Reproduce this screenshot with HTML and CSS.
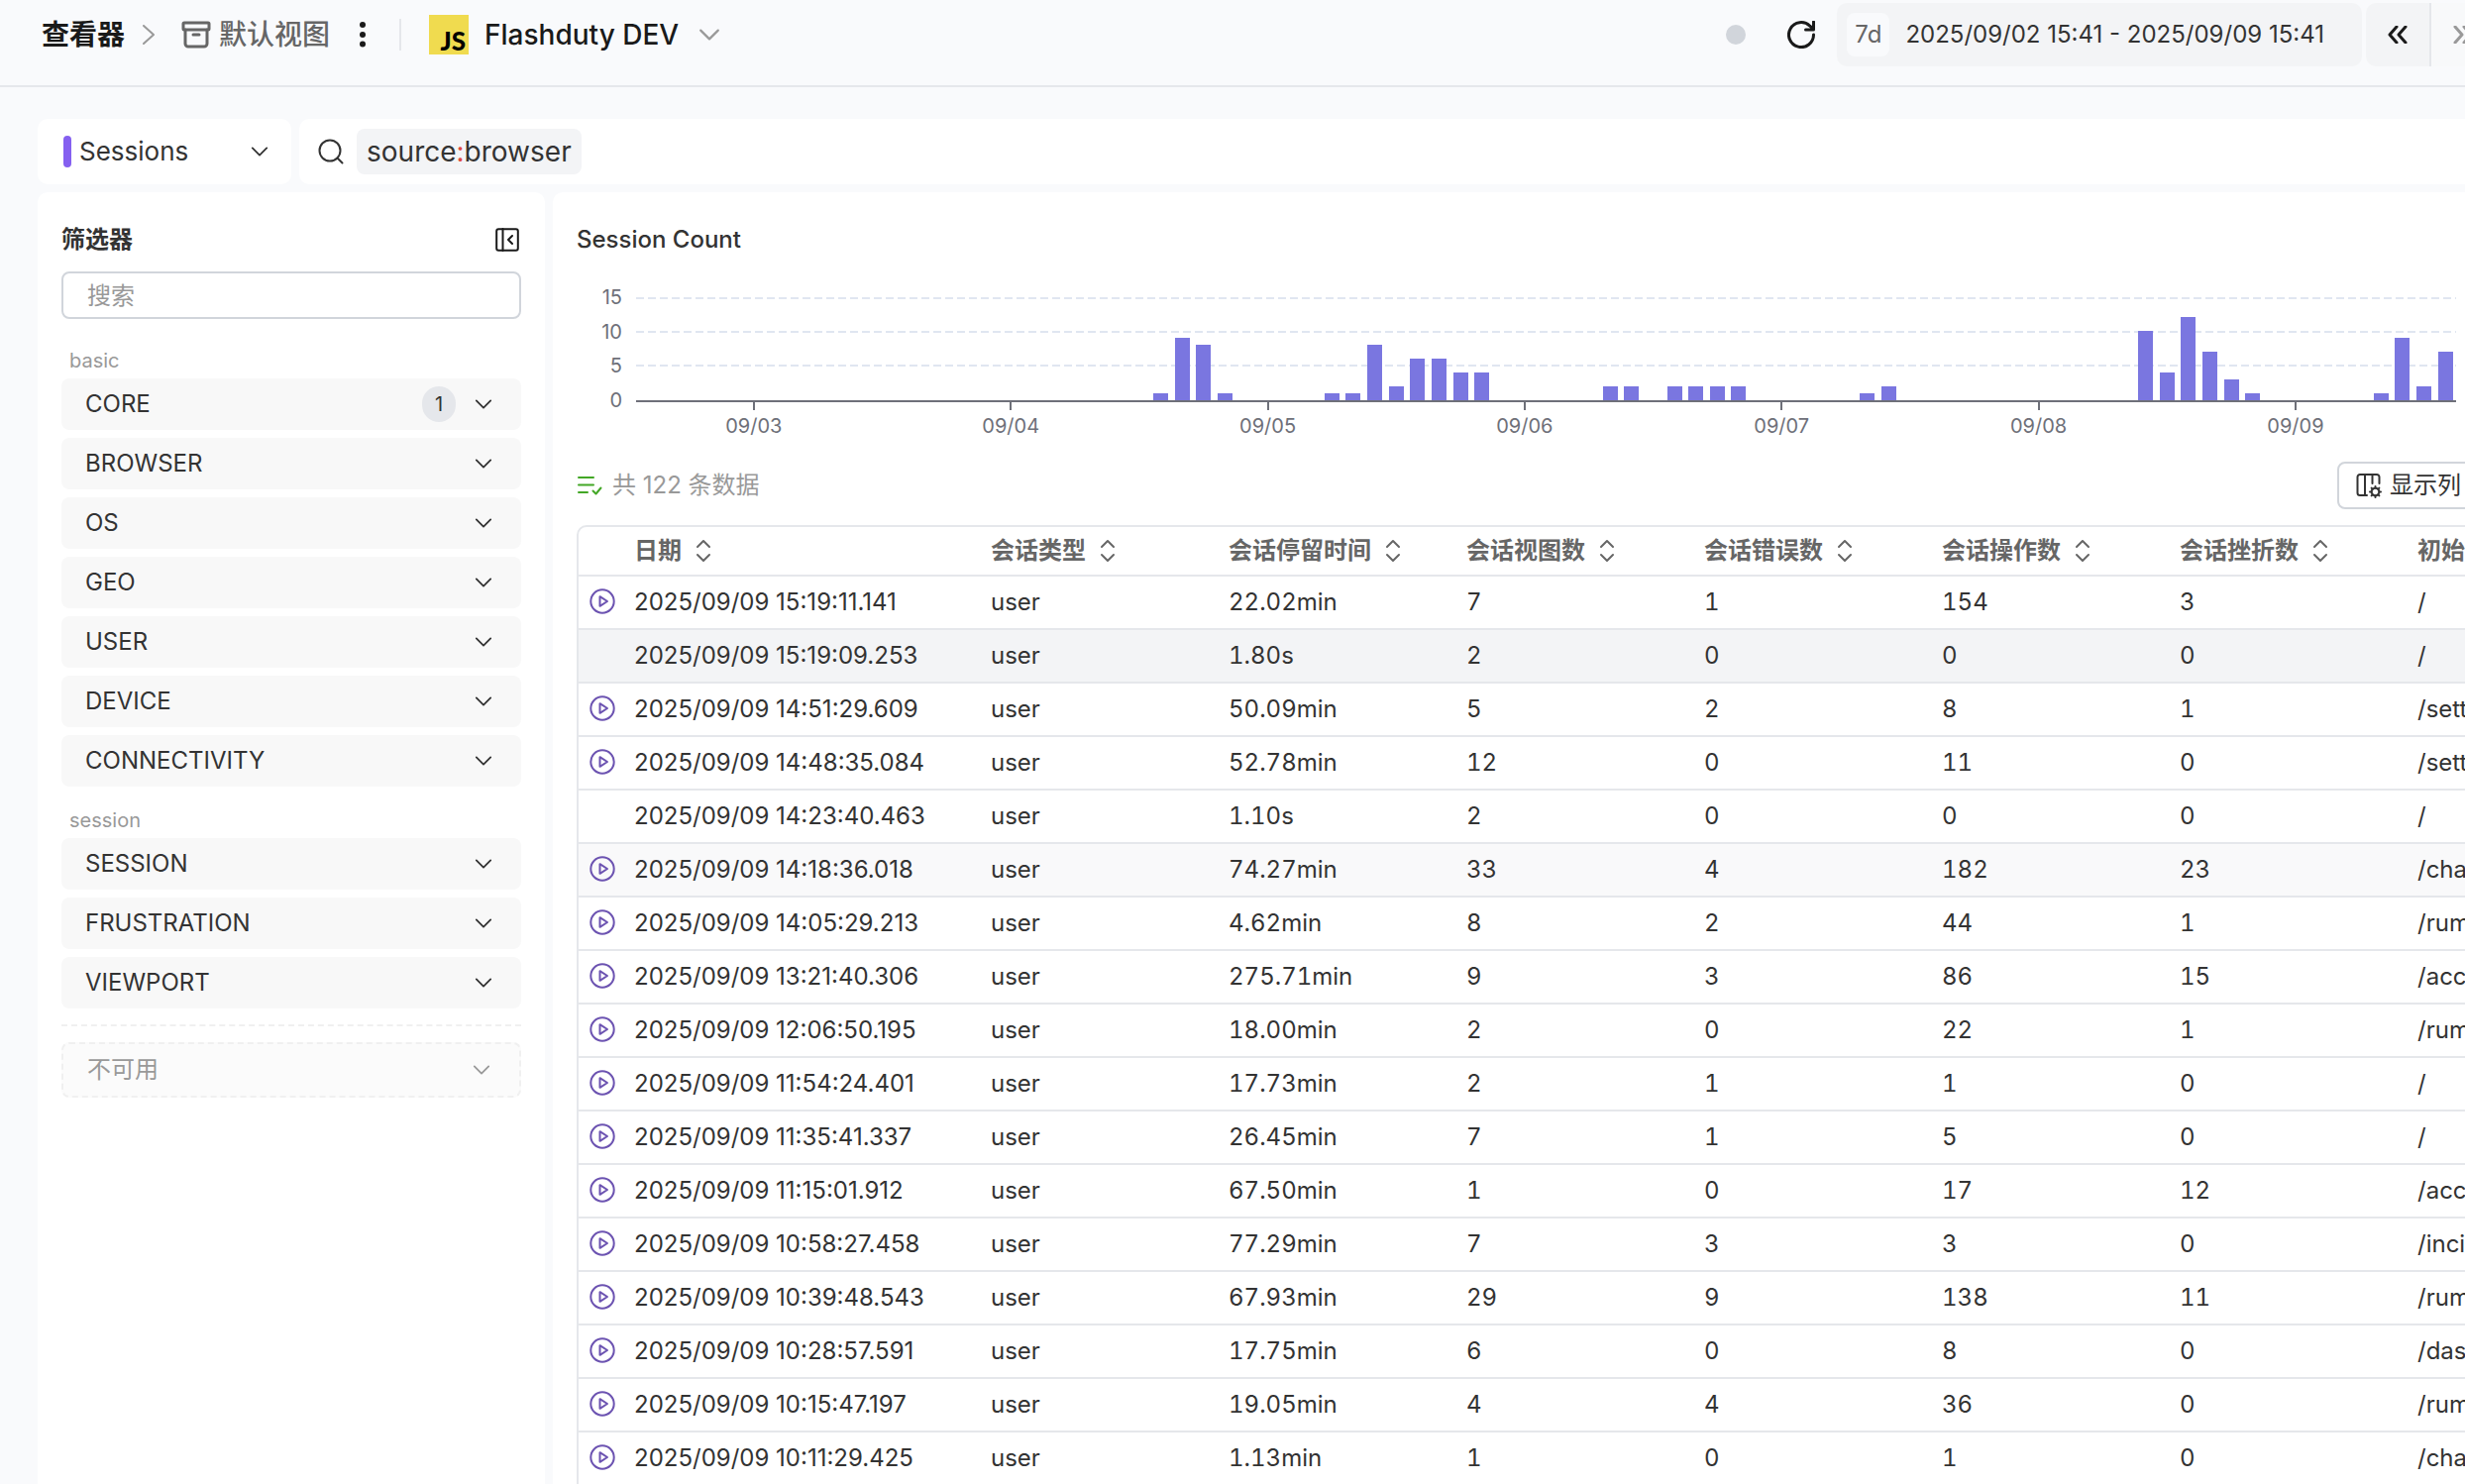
FILE: index.html
```html
<!DOCTYPE html>
<html lang="zh-CN">
<head>
<meta charset="utf-8">
<title>查看器 - Flashduty</title>
<link rel="stylesheet" href="styles.css">
</head>
<body>
<svg class="sprite" aria-hidden="true">
  <symbol id="down" viewBox="0 0 20 12"><path d="M2 2l8 8 8-8"/></symbol>
  <symbol id="sort" viewBox="0 0 16 24"><path d="M2 8l6-6 6 6M2 16l6 6 6-6"/></symbol>
  <symbol id="play" viewBox="0 0 26 26"><circle cx="13" cy="13" r="11.700"/><path d="M10.500 8.200v9.600l7.500-4.800z"/></symbol>
</svg>
<div class="app">
  <header class="topbar">
    <nav class="crumbs" aria-label="导航">
      <a class="crumb" href="#">查看器</a>
      <svg class="icon crumb-sep" viewBox="0 0 12 20"><path d="M1 1l10 9-10 9"/></svg>
      <a class="view" href="#">
        <svg class="icon archive" viewBox="0 0 30 28"><rect x="2" y="2" width="26" height="7" rx="1"/><path d="M4 9v14a3 3 0 0 0 3 3h16a3 3 0 0 0 3-3V9M12 14h6"/></svg>
        默认视图
      </a>
      <button class="more" aria-label="更多"><svg viewBox="0 0 6 26"><circle cx="3" cy="3" r="3"/><circle cx="3" cy="13" r="3"/><circle cx="3" cy="22.500" r="3"/></svg></button>
      <button class="project">
        <span class="js">JS</span>
        Flashduty DEV
        <svg class="icon chev-lg"><use href="#down"/></svg>
      </button>
    </nav>
    <div class="time">
      <span class="dot"></span>
      <button class="refresh" aria-label="刷新"><svg class="icon" viewBox="0 0 28 28"><path d="M26.500 14a12.500 12.500 0 1 1-3.700-8.800l3.700 3.300M26.500 1v8h-8"/></svg></button>
      <button class="range"><span class="preset">7d</span>2025/09/02 15:41 - 2025/09/09 15:41</button>
      <div class="steps">
        <button aria-label="上一段"><svg class="icon" viewBox="0 0 20 18"><path d="M9 1L2 9l7 8M18 1l-7 8 7 8"/></svg></button>
        <button aria-label="下一段" disabled><svg class="icon" viewBox="0 0 20 18"><path d="M2 1l7 8-7 8M11 1l7 8-7 8"/></svg></button>
      </div>
    </div>
  </header>

  <div class="workspace">
    <div class="query">
      <label class="scope">
        <span class="scope-mark"></span>
        <select aria-label="类型"><option>Sessions</option></select>
        <svg class="icon chev"><use href="#down"/></svg>
      </label>
      <div class="search">
        <svg class="icon" viewBox="0 0 26 26"><circle cx="12" cy="12" r="10.500"/><path d="M19.500 19.500l5 5"/></svg>
        <span class="token">source<b>:</b>browser</span>
        <input aria-label="查询">
      </div>
    </div>

    <div class="columns">
      <aside class="panel filters">
        <div class="filters-head">
          <h2>筛选器</h2>
          <button aria-label="收起"><svg class="icon" viewBox="0 0 24 24"><rect x="1.200" y="1.200" width="21.600" height="21.600" rx="2"/><path d="M7.500 1v22M17 8l-4 4 4 4"/></svg></button>
        </div>
        <input class="find" placeholder="搜索" aria-label="搜索">
        <h3>basic</h3>
        <div class="group">
          <button>CORE<span class="count">1</span><svg class="icon chev"><use href="#down"/></svg></button>
          <button>BROWSER<svg class="icon chev"><use href="#down"/></svg></button>
          <button>OS<svg class="icon chev"><use href="#down"/></svg></button>
          <button>GEO<svg class="icon chev"><use href="#down"/></svg></button>
          <button>USER<svg class="icon chev"><use href="#down"/></svg></button>
          <button>DEVICE<svg class="icon chev"><use href="#down"/></svg></button>
          <button>CONNECTIVITY<svg class="icon chev"><use href="#down"/></svg></button>
        </div>
        <h3>session</h3>
        <div class="group">
          <button>SESSION<svg class="icon chev"><use href="#down"/></svg></button>
          <button>FRUSTRATION<svg class="icon chev"><use href="#down"/></svg></button>
          <button>VIEWPORT<svg class="icon chev"><use href="#down"/></svg></button>
        </div>
        <hr>
        <button class="unavailable">不可用<svg class="icon chev"><use href="#down"/></svg></button>
      </aside>

      <main class="panel results">
        <h2>Session Count</h2>
        <div class="chart">
          <div class="scale"><span>15</span><span>10</span><span>5</span><span>0</span></div>
          <div class="plot">
            <i style="--c:25;--v:1"></i><i style="--c:26;--v:9"></i><i style="--c:27;--v:8"></i><i style="--c:28;--v:1"></i>
            <i style="--c:33;--v:1"></i><i style="--c:34;--v:1"></i><i style="--c:35;--v:8"></i><i style="--c:36;--v:2"></i><i style="--c:37;--v:6"></i><i style="--c:38;--v:6"></i><i style="--c:39;--v:4"></i><i style="--c:40;--v:4"></i>
            <i style="--c:46;--v:2"></i><i style="--c:47;--v:2"></i><i style="--c:49;--v:2"></i><i style="--c:50;--v:2"></i><i style="--c:51;--v:2"></i><i style="--c:52;--v:2"></i>
            <i style="--c:58;--v:1"></i><i style="--c:59;--v:2"></i>
            <i style="--c:71;--v:10"></i><i style="--c:72;--v:4"></i><i style="--c:73;--v:12"></i><i style="--c:74;--v:7"></i><i style="--c:75;--v:3"></i><i style="--c:76;--v:1"></i>
            <i style="--c:82;--v:1"></i><i style="--c:83;--v:9"></i><i style="--c:84;--v:2"></i><i style="--c:85;--v:7"></i>
          </div>
          <div class="days">
            <span style="--c:4">09/03</span><span style="--c:16">09/04</span><span style="--c:28">09/05</span><span style="--c:40">09/06</span><span style="--c:52">09/07</span><span style="--c:64">09/08</span><span style="--c:76">09/09</span>
          </div>
        </div>

        <div class="summary">
          <svg class="icon" viewBox="0 0 26 20"><path d="M2 2h15M2 9.500h15M2 17h9M16.500 15.500l3 3 5-6"/></svg>
          <span>共 122 条数据</span>
          <button><svg class="icon" viewBox="0 0 26 26"><path d="M11 23H4a2.500 2.500 0 0 1-2.500-2.500v-16A2.500 2.500 0 0 1 4 2h17a2.500 2.500 0 0 1 2.500 2.500V11M9 2v21M16.500 2v9"/><circle cx="19.500" cy="19.500" r="3.800"/><path d="M19.500 14v1.500M19.500 23.500V25M14 19.500h1.500M23.500 19.500H25M15.600 15.600l1.200 1.200M22.200 22.200l1.200 1.200M15.600 23.400l1.200-1.200M22.200 16.800l1.200-1.200"/></svg>显示列</button>
        </div>

        <div class="table-wrap">
          <table>
            <colgroup><col class="c-play"><col class="c-date"><col><col><col><col><col><col><col></colgroup>
            <thead>
              <tr><th></th><th>日期<svg class="icon sort"><use href="#sort"/></svg></th><th>会话类型<svg class="icon sort"><use href="#sort"/></svg></th><th>会话停留时间<svg class="icon sort"><use href="#sort"/></svg></th><th>会话视图数<svg class="icon sort"><use href="#sort"/></svg></th><th>会话错误数<svg class="icon sort"><use href="#sort"/></svg></th><th>会话操作数<svg class="icon sort"><use href="#sort"/></svg></th><th>会话挫折数<svg class="icon sort"><use href="#sort"/></svg></th><th>初始页面</th></tr>
            </thead>
            <tbody>
              <tr><td><svg class="icon play"><use href="#play"/></svg></td><td>2025/09/09 15:19:11.141</td><td>user</td><td>22.02min</td><td>7</td><td>1</td><td>154</td><td>3</td><td>/</td></tr>
              <tr class="active"><td></td><td>2025/09/09 15:19:09.253</td><td>user</td><td>1.80s</td><td>2</td><td>0</td><td>0</td><td>0</td><td>/</td></tr>
              <tr><td><svg class="icon play"><use href="#play"/></svg></td><td>2025/09/09 14:51:29.609</td><td>user</td><td>50.09min</td><td>5</td><td>2</td><td>8</td><td>1</td><td>/settings</td></tr>
              <tr><td><svg class="icon play"><use href="#play"/></svg></td><td>2025/09/09 14:48:35.084</td><td>user</td><td>52.78min</td><td>12</td><td>0</td><td>11</td><td>0</td><td>/settings</td></tr>
              <tr><td></td><td>2025/09/09 14:23:40.463</td><td>user</td><td>1.10s</td><td>2</td><td>0</td><td>0</td><td>0</td><td>/</td></tr>
              <tr class="hover"><td><svg class="icon play"><use href="#play"/></svg></td><td>2025/09/09 14:18:36.018</td><td>user</td><td>74.27min</td><td>33</td><td>4</td><td>182</td><td>23</td><td>/channel</td></tr>
              <tr><td><svg class="icon play"><use href="#play"/></svg></td><td>2025/09/09 14:05:29.213</td><td>user</td><td>4.62min</td><td>8</td><td>2</td><td>44</td><td>1</td><td>/rum</td></tr>
              <tr><td><svg class="icon play"><use href="#play"/></svg></td><td>2025/09/09 13:21:40.306</td><td>user</td><td>275.71min</td><td>9</td><td>3</td><td>86</td><td>15</td><td>/account</td></tr>
              <tr><td><svg class="icon play"><use href="#play"/></svg></td><td>2025/09/09 12:06:50.195</td><td>user</td><td>18.00min</td><td>2</td><td>0</td><td>22</td><td>1</td><td>/rum</td></tr>
              <tr><td><svg class="icon play"><use href="#play"/></svg></td><td>2025/09/09 11:54:24.401</td><td>user</td><td>17.73min</td><td>2</td><td>1</td><td>1</td><td>0</td><td>/</td></tr>
              <tr><td><svg class="icon play"><use href="#play"/></svg></td><td>2025/09/09 11:35:41.337</td><td>user</td><td>26.45min</td><td>7</td><td>1</td><td>5</td><td>0</td><td>/</td></tr>
              <tr><td><svg class="icon play"><use href="#play"/></svg></td><td>2025/09/09 11:15:01.912</td><td>user</td><td>67.50min</td><td>1</td><td>0</td><td>17</td><td>12</td><td>/account</td></tr>
              <tr><td><svg class="icon play"><use href="#play"/></svg></td><td>2025/09/09 10:58:27.458</td><td>user</td><td>77.29min</td><td>7</td><td>3</td><td>3</td><td>0</td><td>/incident</td></tr>
              <tr><td><svg class="icon play"><use href="#play"/></svg></td><td>2025/09/09 10:39:48.543</td><td>user</td><td>67.93min</td><td>29</td><td>9</td><td>138</td><td>11</td><td>/rum</td></tr>
              <tr><td><svg class="icon play"><use href="#play"/></svg></td><td>2025/09/09 10:28:57.591</td><td>user</td><td>17.75min</td><td>6</td><td>0</td><td>8</td><td>0</td><td>/dashboard</td></tr>
              <tr><td><svg class="icon play"><use href="#play"/></svg></td><td>2025/09/09 10:15:47.197</td><td>user</td><td>19.05min</td><td>4</td><td>4</td><td>36</td><td>0</td><td>/rum</td></tr>
              <tr><td><svg class="icon play"><use href="#play"/></svg></td><td>2025/09/09 10:11:29.425</td><td>user</td><td>1.13min</td><td>1</td><td>0</td><td>1</td><td>0</td><td>/channel</td></tr>
            </tbody>
          </table>
        </div>
      </main>
    </div>
  </div>
</div>
</body>
</html>
```
FILE: styles.css
```css
* { box-sizing: border-box; }

body {
  margin: 0;
  height: 100vh;
  overflow: hidden;
  background: #f9fafc;
  color: #333;
  font: 24px/36px Inter, "Noto Sans CJK SC", sans-serif;
}

h2, h3 { margin: 0; }
a { color: inherit; text-decoration: none; }
button, input, select {
  margin: 0;
  padding: 0;
  border: 0;
  background: none;
  color: inherit;
  font: inherit;
  outline: none;
}

.sprite { position: absolute; width: 0; height: 0; }
.icon {
  flex: none;
  fill: none;
  stroke: currentColor;
  stroke-width: 2;
  stroke-linecap: round;
  stroke-linejoin: round;
}
.chev { width: 18px; height: 12px; stroke-width: 2; }
.chev-lg { width: 22px; height: 14px; stroke-width: 2; color: #999; }

/* The workspace is wider than the viewport and runs off to the right */
.app {
  width: calc(100% + 40px);
  min-height: 100vh;
  display: flex;
  flex-direction: column;
}

/* Top bar */
.topbar {
  display: flex;
  justify-content: space-between;
  align-items: center;
  height: 88px;
  padding: 0 10px 16px 42px;
  border-bottom: 2px solid #e5e7eb;
}
.crumbs, .view, .project, .time, .range, .steps { display: flex; align-items: center; }
.crumbs { font-size: 28px; color: #1a1a1a; }
.crumb { font-weight: 700; }
.crumb-sep { width: 12px; height: 20px; margin: 0 27px 0 18px; color: #999; stroke-width: 2; }
.view { gap: 8px; font-weight: 500; color: #666; }
.archive { width: 30px; height: 28px; stroke-width: 3; }
.more { display: flex; margin: 0 34px 0 30px; }
.more svg { width: 6px; height: 26px; fill: #1a1a1a; }
.project { gap: 16px; font-weight: 500; white-space: nowrap; }
.project::before { content: ""; width: 2px; height: 32px; margin-right: 12px; background: #e5e7eb; }
.project .chev-lg { margin-left: 4px; }
.js {
  display: flex;
  justify-content: flex-end;
  align-items: flex-end;
  width: 40px;
  height: 40px;
  padding-right: 3px;
  background: #f0db4f;
  color: #000;
  font: 900 26px/28px Lato, sans-serif;
}
.dot { width: 20px; height: 20px; border-radius: 50%; background: #d1d5db; }
.refresh { display: flex; margin: 0 22px 0 42px; color: #1a1a1a; }
.refresh .icon { width: 28px; height: 28px; stroke-width: 3; }
.range {
  height: 64px;
  padding: 0 38px 0 10px;
  border-radius: 10px;
  background: #f3f4f6;
  white-space: nowrap;
}
.preset {
  margin-right: 16px;
  padding: 4px 8px;
  border-radius: 8px;
  background: #f9fafc;
  color: #666;
}
.steps { margin-left: 4px; }
.steps button {
  display: flex;
  justify-content: center;
  align-items: center;
  width: 64px;
  height: 64px;
  border-radius: 10px 0 0 10px;
  background: #f3f4f6;
  color: #1a1a1a;
}
.steps button + button {
  width: 66px;
  border-left: 2px solid #e5e7eb;
  border-radius: 0 10px 10px 0;
  background: #f8f9fa;
  color: #999;
}
.steps .icon { width: 20px; height: 18px; stroke-width: 3; }

/* Query bar */
.workspace { flex: 1; display: flex; flex-direction: column; gap: 8px; padding: 32px 0 0 38px; }
.query { display: flex; gap: 8px; font-size: 28px; }
.scope, .search { display: flex; align-items: center; height: 66px; border-radius: 10px; background: #fff; }
.scope { width: 256px; padding: 0 23px 0 26px; font-size: 26px; }
.scope-mark { width: 8px; height: 32px; margin-right: 8px; border-radius: 4px; background: #8560f0; }
.scope select { flex: 1; min-width: 0; appearance: none; }
.search { flex: 1; padding-left: 19px; }
.search .icon { width: 26px; height: 26px; margin-right: 13px; }
.token { padding: 5px 10px; border-radius: 8px; background: #f3f4f6; }
.token b { font-weight: 400; color: #e0483e; }
.search input { flex: 1; }

.columns { flex: 1; display: flex; gap: 8px; }
.panel { padding: 30px 24px 0; border-radius: 10px 10px 0 0; background: #fff; }

/* Filters */
.filters { flex: none; width: 512px; }
.filters-head { display: flex; justify-content: space-between; align-items: center; margin-bottom: 14px; }
.filters h2, .results h2 { font-size: 24px; font-weight: 500; }
.filters h2 { font-weight: 700; }
.filters-head button { display: flex; }
.filters-head .icon { width: 24px; height: 24px; margin-right: 2px; color: #1a1a1a; }
.find {
  display: block;
  width: 100%;
  height: 48px;
  padding: 0 24px;
  border: 2px solid #d1d5db;
  border-radius: 8px;
}
.find::placeholder { color: #999; opacity: 1; }
.filters h3 { margin: 24px 0 0 8px; font-size: 20px; font-weight: 400; color: #999; }
.group { display: flex; flex-direction: column; gap: 8px; }
.group button, .unavailable {
  display: flex;
  align-items: center;
  justify-content: space-between;
  width: 100%;
  height: 52px;
  padding: 0 29px 0 24px;
  border-radius: 8px;
  background: #f8f8f8;
}
.group + h3 { margin-top: 16px; }
.count {
  width: 34px;
  margin: 0 19px 0 auto;
  border-radius: 18px;
  background: #e5e7eb;
  font-size: 20px;
}
.filters hr { margin: 16px 0; border: 0; border-top: 2px dashed #f0f0f0; }
.unavailable { height: 56px; border: 2px dashed #f0f0f0; background: #fbfbfb; color: #999; }

/* Results */
.results { flex: 1; min-width: 0; }
.chart {
  display: grid;
  grid-template-columns: 46px 1fr;
  column-gap: 14px;
  margin: 40px 25px 0 0;
  color: #6e7079;
  font-size: 20px;
  line-height: 20px;
}
.scale {
  display: flex;
  flex-direction: column;
  justify-content: space-between;
  margin: -10px 0 -8px;
  text-align: right;
}
.plot {
  --dash: repeating-linear-gradient(90deg, #e0e6f1 0 8px, transparent 8px 12px);
  display: grid;
  grid-template-columns: repeat(85, 1fr);
  align-items: end;
  height: 106px;
  border-bottom: 2px solid #6e7079;
  background: var(--dash) 0 0 / 100% 2px, var(--dash) 0 34px / 100% 2px, var(--dash) 0 68px / 100% 2px;
  background-repeat: no-repeat;
}
.plot i {
  grid-row: 1;
  grid-column: var(--c);
  justify-self: center;
  width: 15px;
  height: calc(var(--v) * 7px);
  background: #7a76e0;
}
.days { grid-column: 2; display: grid; grid-template-columns: repeat(85, 1fr); }
.days span {
  grid-row: 1;
  grid-column: var(--c) / span 5;
  text-align: center;
}
.days span::before {
  content: "";
  display: block;
  width: 2px;
  height: 8px;
  margin: 0 auto 6px;
  background: #6e7079;
}

.summary { display: flex; align-items: center; gap: 10px; margin: 26px 0 16px; color: #999; }
.summary > .icon { width: 26px; height: 20px; color: #43a726; stroke-width: 2; }
.summary button {
  display: flex;
  align-items: center;
  gap: 8px;
  height: 48px;
  margin-left: auto;
  padding: 0 18px 0 17px;
  border: 2px solid #d1d5db;
  border-radius: 8px;
  color: #333;
}
.summary button .icon { width: 26px; height: 26px; }

.table-wrap { overflow: hidden; border: 2px solid #e5e7eb; border-radius: 10px 0 0 0; }
table { width: 2080px; table-layout: fixed; border-spacing: 0; }
col { width: 240px; }
.c-play { width: 40px; }
.c-date { width: 360px; }
th, td {
  height: 54px;
  padding: 0 16px;
  border-bottom: 2px solid #e5e7eb;
  text-align: left;
  white-space: nowrap;
  font-variant-numeric: tabular-nums;
}
th { height: 50px; color: #666; font-weight: 700; }
td:first-child { padding: 0 0 2px 11px; }
td:nth-child(2) { font-variant-numeric: normal; }
.play { display: block; width: 26px; height: 26px; color: #6c53b1; }
.sort { width: 16px; height: 24px; margin-left: 14px; vertical-align: -4px; }
.active { background: #f3f4f6; }
.hover { background: #f9f9fa; }
```
